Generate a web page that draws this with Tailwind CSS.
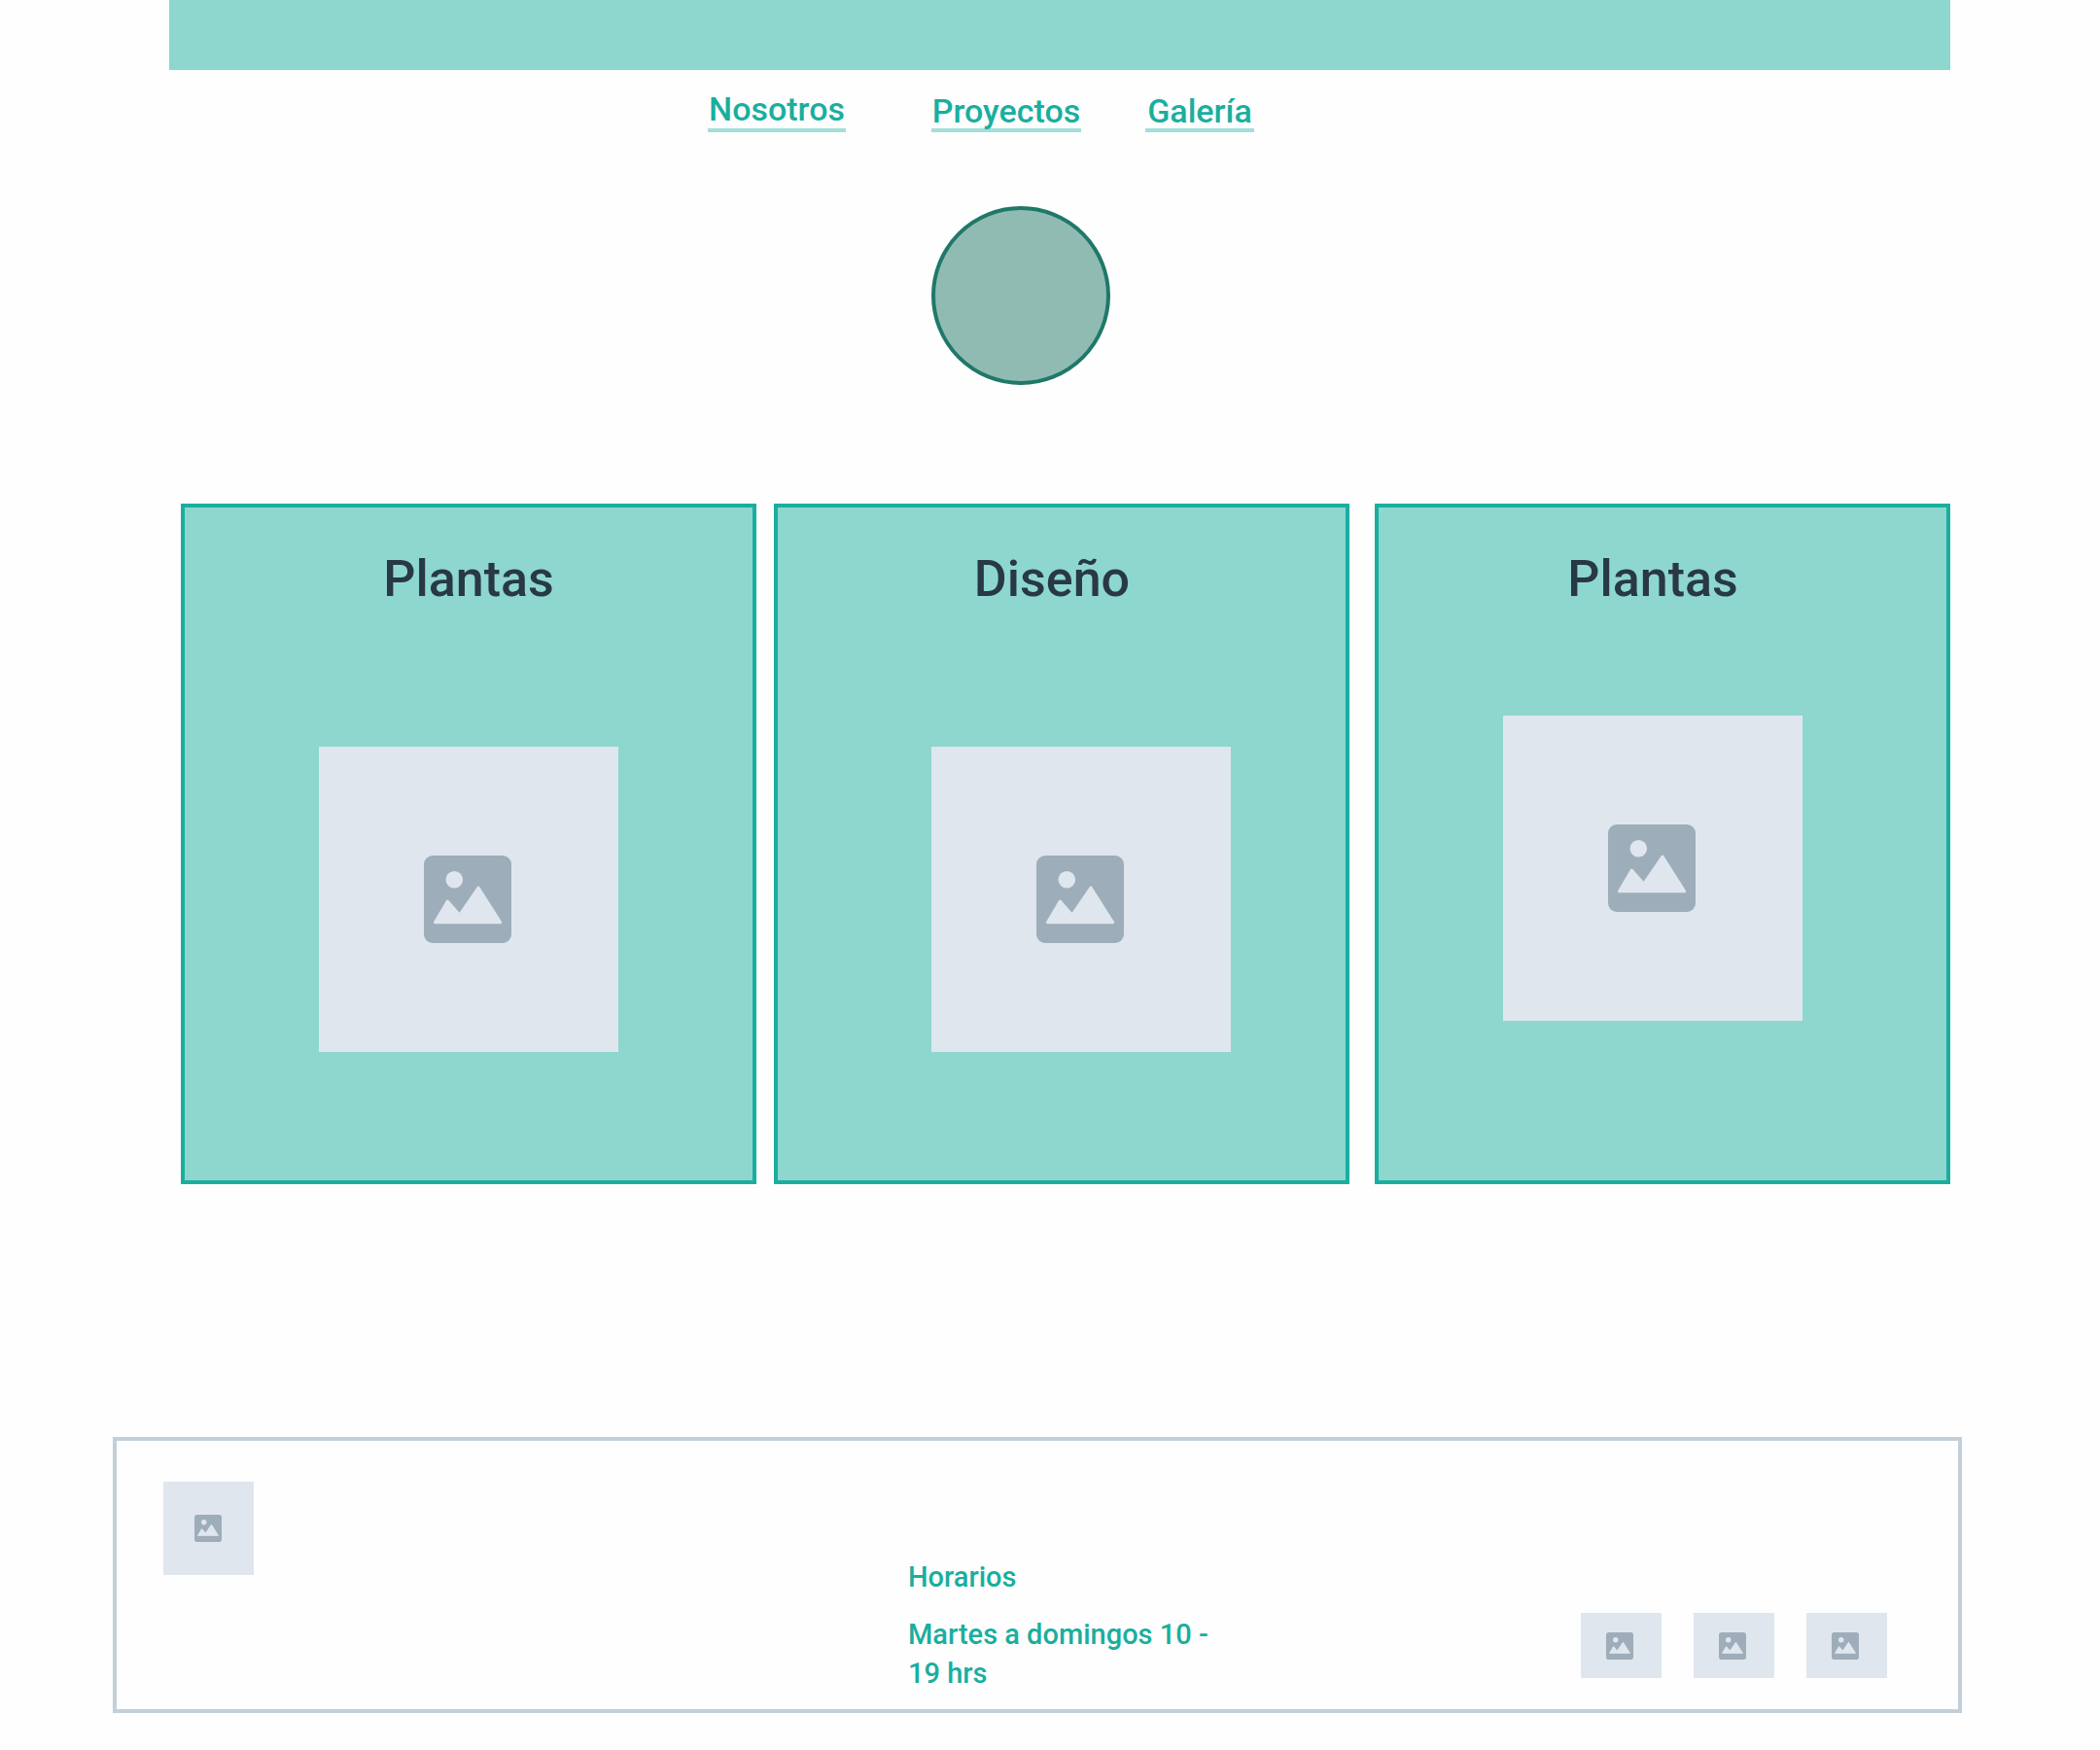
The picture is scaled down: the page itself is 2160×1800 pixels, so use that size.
<!DOCTYPE html>
<html lang="es">
<head>
<meta charset="utf-8">
<meta name="viewport" content="width=device-width, initial-scale=1">
<title>Plantas y diseño</title>
<script src="https://cdn.jsdelivr.net/npm/@tailwindcss/browser@4"></script>
</head>
<body class="bg-[#fefefe] font-['Roboto',sans-serif] font-medium text-[#1aae9f]">
<svg class="hidden" aria-hidden="true">
  <symbol id="picture" viewBox="0 0 90 90">
    <rect width="90" height="90" rx="9" fill="#9eadba"/>
    <circle cx="31.3" cy="24.7" r="8.8" fill="#dfe6ee"/>
    <path d="M11.5 68.7 24.3 47 36.8 61.2 56 33 78.7 68.7Z" fill="#dfe6ee" stroke="#dfe6ee" stroke-width="3" stroke-linejoin="round"/>
  </symbol>
</svg>

<header>
  <div class="ml-[174px] mr-[154px] h-[72px] bg-[#8dd7cf]"></div>
  <nav class="flex items-end justify-center pt-[22px] pr-[142px] text-[34px] leading-[36px]">
    <a href="#nosotros" class="mr-[88px] w-[142px] border-b-4 border-[#a3dfd9] pb-[2px] text-center">Nosotros</a>
    <a href="#proyectos" class="mr-[66px] w-[154px] border-b-4 border-[#a3dfd9] text-center">Proyectos</a>
    <a href="#galeria" class="w-[112px] border-b-4 border-[#a3dfd9] text-center">Galería</a>
  </nav>
  <div class="flex justify-center pt-[76px] pr-[60px]">
    <div class="size-[184px] rounded-full border-4 border-[#207868] bg-[#90bbb3]"></div>
  </div>
</header>

<main class="mt-[122px] ml-[186px] mr-[154px] flex text-[#293845]">
  <section class="mr-[18px] flex h-[700px] flex-1 flex-col items-center border-4 border-[#1aae9f] bg-[#8dd7cf] pt-[42px]">
    <h2 class="text-[52px] leading-[64px]">Plantas</h2>
    <div class="mt-[140px] flex h-[314px] w-[308px] items-center justify-center bg-[#dfe6ee] pr-[2px]">
      <svg class="size-[90px]"><use href="#picture"/></svg>
    </div>
  </section>
  <section class="mr-[26px] flex h-[700px] flex-1 flex-col items-center border-4 border-[#1aae9f] bg-[#8dd7cf] pt-[42px]">
    <h2 class="pr-5 text-[52px] leading-[64px]">Diseño</h2>
    <div class="mt-[140px] ml-10 flex h-[314px] w-[308px] items-center justify-center bg-[#dfe6ee] pr-[2px]">
      <svg class="size-[90px]"><use href="#picture"/></svg>
    </div>
  </section>
  <section class="flex h-[700px] flex-1 flex-col items-center border-4 border-[#1aae9f] bg-[#8dd7cf] pt-[42px]">
    <h2 class="mr-5 text-[52px] leading-[64px]">Plantas</h2>
    <div class="mt-[108px] mr-5 flex h-[314px] w-[308px] items-center justify-center bg-[#dfe6ee] pr-[2px]">
      <svg class="size-[90px]"><use href="#picture"/></svg>
    </div>
  </section>
</main>

<footer class="mt-[260px] mr-[142px] mb-[38px] ml-[116px] grid grid-cols-[766fr_692fr_315px] border-4 border-[#c3cfd9] pt-[42px] pr-[73px] pb-[17px] pl-12">
  <div class="flex h-24 w-[93px] items-center justify-center bg-[#dfe6ee] pr-[2px]">
    <svg class="size-7"><use href="#picture"/></svg>
  </div>
  <div class="max-w-[320px] pt-[78px] text-[29px] leading-[40px]">
    <h3>Horarios</h3>
    <p class="mt-[19px]">Martes a domingos 10 - 19 hrs</p>
  </div>
  <div class="mb-[15px] flex justify-between self-end">
    <a href="#red-1" aria-label="Imagen 1" class="flex h-[67px] w-[83px] items-center justify-center bg-[#dfe6ee] pr-[3px]"><svg class="size-7"><use href="#picture"/></svg></a>
    <a href="#red-2" aria-label="Imagen 2" class="flex h-[67px] w-[83px] items-center justify-center bg-[#dfe6ee] pr-[3px]"><svg class="size-7"><use href="#picture"/></svg></a>
    <a href="#red-3" aria-label="Imagen 3" class="flex h-[67px] w-[83px] items-center justify-center bg-[#dfe6ee] pr-[3px]"><svg class="size-7"><use href="#picture"/></svg></a>
  </div>
</footer>
</body>
</html>
